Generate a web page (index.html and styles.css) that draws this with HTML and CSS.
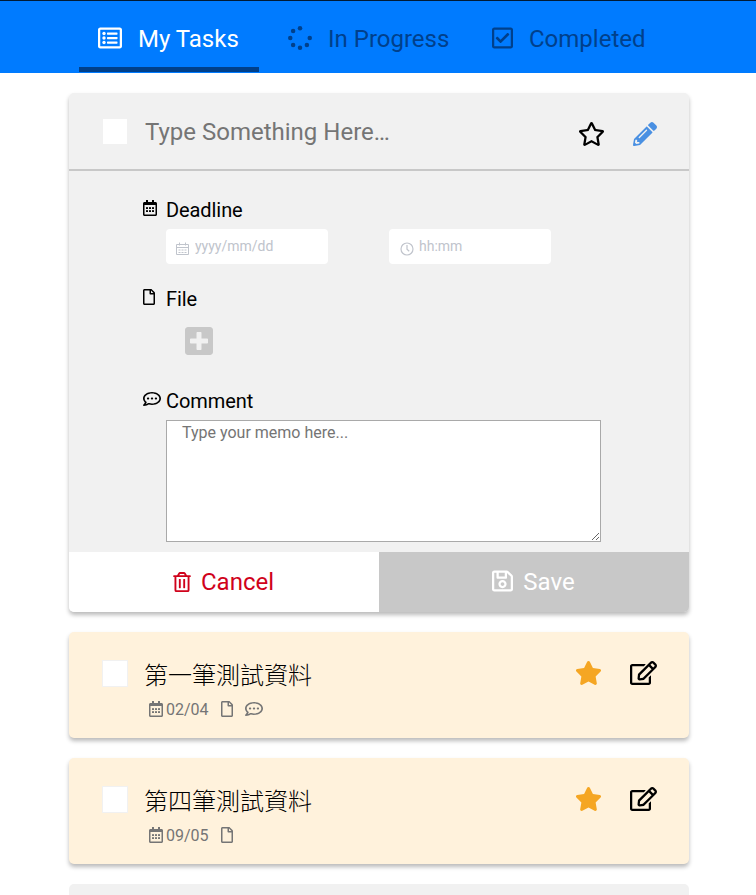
FILE: index.html
```html
<!DOCTYPE html>
<html lang="zh-Hant">
<head>
<meta charset="utf-8">
<title>My Tasks</title>
<link rel="stylesheet" href="styles.css">
</head>
<body>
<svg class="sprite" width="0" height="0" aria-hidden="true">
  <symbol id="list" viewBox="0 0 512 512"><path fill-rule="evenodd" d="M464 32H48C21.5 32 0 53.500 0 80v352c0 26.500 21.500 48 48 48h416c26.500 0 48-21.500 48-48V80c0-26.500-21.500-48-48-48zm-6 400H54a6 6 0 0 1-6-6V86a6 6 0 0 1 6-6h404a6 6 0 0 1 6 6v340a6 6 0 0 1-6 6z"/><rect x="192" y="136" width="224" height="48" rx="12"/><rect x="192" y="232" width="224" height="48" rx="12"/><rect x="192" y="328" width="224" height="48" rx="12"/><circle cx="128" cy="160" r="36"/><circle cx="128" cy="256" r="36"/><circle cx="128" cy="352" r="36"/></symbol>
  <symbol id="spinner" viewBox="0 0 512 512"><circle cx="256" cy="48" r="48"/><circle cx="256" cy="464" r="48"/><circle cx="464" cy="256" r="48"/><circle cx="48" cy="256" r="48"/><circle cx="109" cy="109" r="48"/><circle cx="109" cy="403" r="48"/><circle cx="403" cy="403" r="48"/></symbol>
  <symbol id="check" viewBox="0 0 448 512"><path d="M400 32H48C21.490 32 0 53.490 0 80v352c0 26.510 21.490 48 48 48h352c26.510 0 48-21.490 48-48V80c0-26.510-21.490-48-48-48zm0 400H48V80h352v352zm-35.864-241.724L191.547 361.480c-4.705 4.667-12.303 4.637-16.970-.068l-90.781-91.516c-4.667-4.705-4.637-12.303.069-16.971l22.719-22.536c4.705-4.667 12.303-4.637 16.970.069l59.792 60.277 141.352-140.216c4.705-4.667 12.303-4.637 16.970.068l22.536 22.718c4.667 4.706 4.637 12.304-.068 16.971z"/></symbol>
  <symbol id="star-o" viewBox="0 0 576 512"><path d="M528.1 171.500L382 150.200 316.700 17.800c-11.700-23.600-45.600-23.900-57.400 0L194 150.200 47.900 171.500c-26.200 3.800-36.700 36.100-17.700 54.600l105.700 103-25 145.500c-4.500 26.300 23.200 46 46.400 33.700L288 439.600l130.700 68.700c23.200 12.200 50.900-7.400 46.400-33.700l-25-145.500 105.700-103c19-18.500 8.500-50.800-17.700-54.600zM388.600 312.300l23.700 138.400L288 385.400l-124.300 65.300 23.700-138.400-100.600-98 139-20.200 62.200-126 62.200 126 139 20.200-100.600 98z"/></symbol>
  <symbol id="star" viewBox="0 0 576 512"><path d="M259.300 17.800L194 150.200 47.900 171.500c-26.200 3.800-36.700 36.100-17.700 54.600l105.700 103-25 145.500c-4.500 26.300 23.200 46 46.400 33.700L288 439.600l130.700 68.700c23.200 12.200 50.900-7.400 46.400-33.700l-25-145.500 105.700-103c19-18.500 8.500-50.800-17.700-54.600L382 150.200 316.700 17.800c-11.700-23.600-45.600-23.900-57.400 0z"/></symbol>
  <symbol id="pencil" viewBox="0 0 512 512"><path d="M497.900 142.100l-46.100 46.100c-4.700 4.700-12.300 4.700-17 0l-111-111c-4.700-4.700-4.700-12.300 0-17l46.100-46.100c18.700-18.700 49.100-18.700 67.900 0l60.100 60.100c18.800 18.700 18.800 49.100 0 67.900zM284.200 99.800L21.600 362.400.4 483.900c-2.900 16.400 11.400 30.600 27.800 27.800l121.500-21.300 262.600-262.600c4.700-4.700 4.700-12.300 0-17l-111-111c-4.800-4.700-12.400-4.700-17.100 0zM124.100 339.900c-5.500-5.500-5.500-14.300 0-19.800l154-154c5.500-5.500 14.300-5.500 19.800 0s5.500 14.300 0 19.800l-154 154c-5.500 5.500-14.300 5.500-19.800 0zM88 424h48v36.300l-64.500 11.300-31.100-31.100L51.700 376H88v48z"/></symbol>
  <symbol id="edit" viewBox="0 0 576 512"><path d="M402.300 344.900l32-32c5-5 13.700-1.500 13.700 5.700V464c0 26.500-21.500 48-48 48H48c-26.500 0-48-21.500-48-48V112c0-26.500 21.500-48 48-48h273.500c7.100 0 10.700 8.600 5.700 13.700l-32 32c-1.500 1.500-3.500 2.300-5.700 2.300H48v352h352V350.500c0-2.100.8-4.100 2.300-5.600zm156.600-201.800L296.300 405.700l-90.400 10c-26.200 2.900-48.500-19.200-45.600-45.600l10-90.400L432.900 17.100c22.900-22.900 59.900-22.900 82.700 0l43.200 43.200c22.900 22.900 22.900 60 .1 82.800zM460.100 174L402 115.900 216.200 301.800l-7.300 65.300 65.300-7.300L460.100 174zm64.800-79.700l-43.200-43.200c-4.100-4.100-10.800-4.100-14.800 0L436 82l58.100 58.100 30.900-30.900c4-4.200 4-10.800-.1-14.900z"/></symbol>
  <symbol id="calendar" viewBox="0 0 448 512"><path fill-rule="evenodd" d="M448 112v352c0 26.500-21.500 48-48 48H48c-26.500 0-48-21.500-48-48V112c0-26.500 21.500-48 48-48h48V12c0-6.600 5.400-12 12-12h40c6.600 0 12 5.400 12 12v52h128V12c0-6.600 5.400-12 12-12h40c6.600 0 12 5.400 12 12v52h48c26.500 0 48 21.500 48 48zm-48 346V160H48v298c0 3.300 2.700 6 6 6h340c3.300 0 6-2.700 6-6z"/><rect x="96" y="224" width="64" height="64" rx="12"/><rect x="192" y="224" width="64" height="64" rx="12"/><rect x="288" y="224" width="64" height="64" rx="12"/><rect x="96" y="320" width="64" height="64" rx="12"/><rect x="192" y="320" width="64" height="64" rx="12"/><rect x="288" y="320" width="64" height="64" rx="12"/></symbol>
  <symbol id="file" viewBox="0 0 384 512"><path d="M369.900 97.900L286 14C277 5 264.800 0 252.100 0H48C21.500 0 0 21.500 0 48v416c0 26.500 21.500 48 48 48h288c26.500 0 48-21.500 48-48V131.900c0-12.700-5.100-25-14.100-34zM332.100 128H256V51.900l76.100 76.100zM48 464V48h160v104c0 13.300 10.700 24 24 24h104v288H48z"/></symbol>
  <symbol id="comment" viewBox="0 32 512 448" preserveAspectRatio="none"><path d="M144 208c-17.700 0-32 14.300-32 32s14.300 32 32 32 32-14.300 32-32-14.300-32-32-32zm112 0c-17.700 0-32 14.300-32 32s14.300 32 32 32 32-14.300 32-32-14.300-32-32-32zm112 0c-17.700 0-32 14.300-32 32s14.300 32 32 32 32-14.300 32-32-14.300-32-32-32zM256 32C114.600 32 0 125.100 0 240c0 47.600 19.900 91.200 52.900 126.300C38 405.700 7 439.100 6.500 439.500c-6.600 7-8.400 17.200-4.600 26S14.400 480 24 480c61.500 0 110-25.700 139.100-46.300C192 442.800 223.200 448 256 448c141.400 0 256-93.100 256-208S397.400 32 256 32zm0 368c-26.700 0-53.100-4.100-78.400-12.100l-22.700-7.200-19.500 13.800c-14.300 10.100-33.900 21.400-57.500 29 7.300-12.100 14.400-25.700 19.900-40.200l10.600-28.100-20.600-21.800C69.700 314.100 48 282.200 48 240c0-88.200 93.300-160 208-160s208 71.800 208 160-93.300 160-208 160z"/></symbol>
  <symbol id="plus" viewBox="0 32 448 448"><path d="M400 32H48C21.500 32 0 53.500 0 80v352c0 26.500 21.500 48 48 48h352c26.500 0 48-21.500 48-48V80c0-26.500-21.500-48-48-48zm-32 252c0 6.600-5.400 12-12 12h-92v92c0 6.600-5.400 12-12 12h-56c-6.600 0-12-5.400-12-12v-92H92c-6.600 0-12-5.400-12-12v-56c0-6.600 5.400-12 12-12h92v-92c0-6.600 5.400-12 12-12h56c6.600 0 12 5.400 12 12v92h92c6.600 0 12 5.400 12 12v56z"/></symbol>
  <symbol id="trash" viewBox="0 0 448 512"><path d="M268 416h24a12 12 0 0 0 12-12V188a12 12 0 0 0-12-12h-24a12 12 0 0 0-12 12v216a12 12 0 0 0 12 12zM432 80h-82.410l-34-56.700A48 48 0 0 0 274.410 0H173.590a48 48 0 0 0-41.160 23.300L98.410 80H16A16 16 0 0 0 0 96v16a16 16 0 0 0 16 16h16v336a48 48 0 0 0 48 48h288a48 48 0 0 0 48-48V128h16a16 16 0 0 0 16-16V96a16 16 0 0 0-16-16zM171.840 50.910A6 6 0 0 1 177 48h94a6 6 0 0 1 5.150 2.910L293.610 80H154.390zM368 464H80V128h288zm-212-48h24a12 12 0 0 0 12-12V188a12 12 0 0 0-12-12h-24a12 12 0 0 0-12 12v216a12 12 0 0 0 12 12z"/></symbol>
  <symbol id="save" viewBox="0 0 448 512"><path d="M433.941 129.941l-83.882-83.882A48 48 0 0 0 316.118 32H48C21.490 32 0 53.490 0 80v352c0 26.510 21.490 48 48 48h352c26.510 0 48-21.490 48-48V163.882a48 48 0 0 0-14.059-33.941zM272 80v80H144V80h128zm122 352H54a6 6 0 0 1-6-6V86a6 6 0 0 1 6-6h42v104c0 13.255 10.745 24 24 24h176c13.255 0 24-10.745 24-24V83.882l78.243 78.243a6 6 0 0 1 1.757 4.243V426a6 6 0 0 1-6 6zM224 232c-48.523 0-88 39.477-88 88s39.477 88 88 88 88-39.477 88-88-39.477-88-88-88zm0 128c-22.056 0-40-17.944-40-40s17.944-40 40-40 40 17.944 40 40-17.944 40-40 40z"/></symbol>
  <symbol id="date" viewBox="0 0 14 14"><path fill="none" stroke="currentColor" d="M.5 2.500h12v10H.5zM.5 5.500h12M3.500.5v3M9.500.5v3M2.500 8h2M5.500 8h2M8.500 8h2M2.500 10.500h2M5.500 10.500h2M8.500 10.500h2"/></symbol>
  <symbol id="clock" viewBox="0 0 14 14"><path fill="none" stroke="currentColor" stroke-width="1.200" d="M7 3v4.200l2.200 2M13 7A6 6 0 1 1 1 7a6 6 0 0 1 12 0z"/></symbol>
</svg>

<nav class="tabs">
  <a class="tab tab--active"><svg class="ico ico--24"><use href="#list"/></svg><span>My Tasks</span></a>
  <a class="tab tab--progress"><svg class="ico ico--24"><use href="#spinner"/></svg><span>In Progress</span></a>
  <a class="tab tab--done"><svg class="ico ico--21"><use href="#check"/></svg><span>Completed</span></a>
</nav>

<main class="list">
  <form class="card">
    <div class="editor-head">
      <span class="box"></span>
      <input class="title-input" type="text" placeholder="Type Something Here…">
      <svg class="ico ico--27"><use href="#star-o"/></svg>
      <svg class="ico ico--24 pencil"><use href="#pencil"/></svg>
    </div>
    <div class="editor-body">
      <section class="field">
        <svg class="ico ico--cal"><use href="#calendar"/></svg>
        <div class="field-main">
          <div class="label">Deadline</div>
          <div class="pickers">
            <label class="picker"><svg class="ico ico--14"><use href="#date"/></svg><input type="text" placeholder="yyyy/mm/dd"></label>
            <label class="picker picker--time"><svg class="ico ico--14"><use href="#clock"/></svg><input type="text" placeholder="hh:mm"></label>
          </div>
        </div>
      </section>
      <section class="field field--file">
        <svg class="ico ico--file"><use href="#file"/></svg>
        <div class="field-main">
          <div class="label">File</div>
          <svg class="ico plus"><use href="#plus"/></svg>
        </div>
      </section>
      <section class="field field--comment">
        <svg class="ico ico--comment"><use href="#comment"/></svg>
        <div class="field-main">
          <div class="label">Comment</div>
          <textarea class="memo" placeholder="Type your memo here..."></textarea>
        </div>
      </section>
    </div>
    <div class="actions">
      <div class="btn btn--cancel"><svg class="ico ico--trash"><use href="#trash"/></svg>Cancel</div>
      <div class="btn btn--save"><svg class="ico ico--21"><use href="#save"/></svg>Save</div>
    </div>
  </form>

  <article class="card task">
    <span class="box"></span>
    <div class="task-main">
      <div class="task-title">第一筆測試資料</div>
      <div class="meta">
        <svg class="ico ico--cal"><use href="#calendar"/></svg><span class="date">02/04</span>
        <svg class="ico ico--file"><use href="#file"/></svg>
        <svg class="ico ico--comment"><use href="#comment"/></svg>
      </div>
    </div>
    <svg class="ico ico--27 starred"><use href="#star"/></svg>
    <svg class="ico ico--27 edit"><use href="#edit"/></svg>
  </article>

  <article class="card task">
    <span class="box"></span>
    <div class="task-main">
      <div class="task-title">第四筆測試資料</div>
      <div class="meta">
        <svg class="ico ico--cal"><use href="#calendar"/></svg><span class="date">09/05</span>
        <svg class="ico ico--file"><use href="#file"/></svg>
      </div>
    </div>
    <svg class="ico ico--27 starred"><use href="#star"/></svg>
    <svg class="ico ico--27 edit"><use href="#edit"/></svg>
  </article>

  <article class="card task--next"></article>
</main>
</body>
</html>
```
FILE: styles.css
```css
* { box-sizing: border-box; }
body {
  margin: 0;
  background: #fff;
  color: #000;
  font-family: Roboto, "Noto Sans CJK TC", sans-serif;
}
input, textarea {
  font-family: inherit;
  border: 0;
  outline: 0;
  padding: 0;
  margin: 0;
}
.sprite { display: block; }
.ico { display: block; flex: none; fill: currentColor; }
.ico--24 { width: 24px; height: 24px; }
.ico--21 { width: 21px; height: 24px; }
.ico--27 { width: 27px; height: 24px; }
.ico--14 { width: 14px; height: 14px; }
.ico--cal { width: 14px; height: 16px; }
.ico--file { width: 12px; height: 16px; }
.ico--comment { width: 18px; height: 14px; }
.ico--trash { width: 18px; height: 20px; }

.tabs {
  display: flex;
  height: 73px;
  padding-left: 79px;
  border-top: 1px solid #001a35;
  background: #007bff;
}
.tab {
  display: flex;
  gap: 16px;
  height: 71px;
  padding: 25px 19px 0;
  border-bottom: 5px solid transparent;
  color: #00408b;
  font-size: 24px;
  line-height: 27px;
  white-space: nowrap;
}
.tab--active { width: 180px; color: #fff; border-bottom-color: #00408b; }
.tab--progress { width: 204px; margin-left: 10px; }

.list {
  display: flex;
  flex-direction: column;
  gap: 20px;
  width: 620px;
  height: 802px;
  margin: 20px 0 0 69px;
}
.card {
  flex: none;
  margin: 0;
  border-radius: 5px;
  background: #f1f1f1;
  box-shadow: 0 3px 4px #bbb;
}
.box {
  flex: none;
  width: 26px;
  height: 27px;
  border: 1px solid #f1f1f1;
  background: #fff;
}
.editor-head {
  display: flex;
  height: 78px;
  padding: 25px 32px 0 33px;
  border-bottom: 2px solid #c8c8c8;
}
.title-input {
  width: 400px;
  height: 28px;
  margin-left: 17px;
  background: transparent;
  font-size: 24px;
  line-height: 28px;
}
.title-input::placeholder { color: #757575; }
.editor-head .ico { margin-top: 4px; }
.editor-head .ico--27 { margin-left: 33px; }
.editor-head .pencil { margin-left: 28px; color: #4a90e2; }

.editor-body { padding: 27px 0 10px 74px; }
.field { display: grid; grid-template-columns: 23px 1fr; }
.field > .ico { margin-top: 2px; }
.field--file { margin-top: 23px; }
.field--comment { margin-top: 34px; }
.field .ico--comment { margin-top: 3px; }
.label { font-size: 20px; line-height: 24px; letter-spacing: -0.08px; }
.pickers { display: flex; gap: 61px; margin-top: 7px; }
.picker {
  display: flex;
  align-items: center;
  gap: 5px;
  width: 162px;
  height: 35px;
  padding: 0 0 2px 10px;
  border-radius: 4px;
  background: #fff;
  color: #c0c4cc;
}
.picker--time { padding-left: 11px; }
.picker .ico { margin-top: 7px; }
.picker input { width: 110px; font-size: 14px; background: transparent; }
.picker input::placeholder { color: #c0c4cc; }
.plus { width: 28px; height: 28px; margin: 16px 0 0 19px; color: #c8c8c8; }
.memo {
  display: block;
  width: 435px;
  height: 122px;
  margin-top: 7px;
  padding: 2px 15px;
  border: 1px solid #a9a9a9;
  background: #fff;
  font-size: 16px;
  line-height: 19px;
  resize: both;
}
.memo::placeholder { color: #757575; }

.actions { display: flex; height: 60px; }
.btn {
  display: flex;
  align-items: center;
  justify-content: center;
  gap: 10px;
  width: 310px;
  padding-right: 1px;
  font-size: 24px;
  line-height: 28px;
}
.btn--cancel { border-bottom-left-radius: 5px; background: #fff; color: #d0021b; }
.btn--save { border-bottom-right-radius: 5px; background: #c8c8c8; color: #fff; }
.btn--save .ico { margin-top: -2px; }

.task {
  display: flex;
  height: 106px;
  padding: 29px 32px 0 33px;
  background: #fff2dc;
}
.task .box { margin-top: -1px; }
.task--next { height: 11px; border-radius: 5px 5px 0 0; box-shadow: none; }
.task-main { width: 400px; margin: -5px 0 0 17px; }
.task-title {
  margin-left: -1px;
  font-family: "Noto Sans CJK TC", sans-serif;
  font-size: 24px;
  font-weight: 300;
  line-height: 36px;
}
.meta {
  display: flex;
  align-items: center;
  height: 16px;
  margin: 9px 0 0 4px;
  color: #757575;
  font-size: 16px;
  line-height: 16px;
}
.date { margin: 2px 12px 0 3px; }
.meta .ico--comment { margin-left: 12px; }
.starred { margin-left: 30px; color: #f5a623; }
.edit { margin-left: 28px; }
```
